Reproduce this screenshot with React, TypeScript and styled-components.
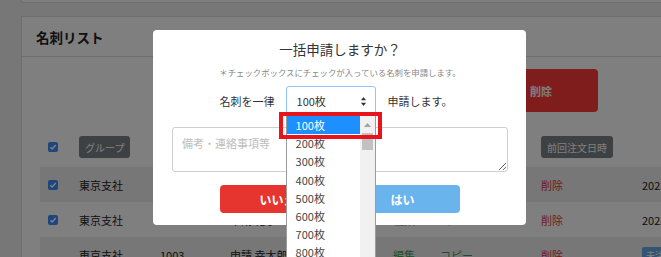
import React from "react";
import styled, { createGlobalStyle } from "styled-components";

const GlobalStyle = createGlobalStyle`
  html, body {
    margin: 0;
    padding: 0;
  }
  body {
    width: 661px;
    height: 257px;
    overflow: hidden;
    background: #eeeeee;
    font-family: "Noto Sans CJK JP", "Liberation Sans", sans-serif;
    color: #333;
  }
`;

/* ---------- page behind the modal ---------- */

const Page = styled.div`
  padding-left: 21px;
`;

const PrevCard = styled.div`
  height: 2px;
  background: #fff;
  border-bottom: 1px solid #dddddd;
  border-left: 1px solid #dddddd;
`;

const ListCard = styled.section`
  margin-top: 13px;
  height: 400px;
  background: #fff;
  border: 1px solid #dddddd;
  border-right: none;
`;

const CardHeader = styled.h2`
  margin: 0;
  height: 39px;
  padding-left: 14px;
  display: flex;
  align-items: center;
  font-size: 13.5px;
  font-weight: bold;
  color: #222;
  border-bottom: 1px solid #dddddd;
`;

const CardBody = styled.div`
  padding: 12px 0 0 18px;
`;

const Toolbar = styled.div`
  display: flex;
  justify-content: flex-end;
  padding-right: 63px;
`;

const DangerButton = styled.button`
  width: 114px;
  height: 43px;
  border: none;
  border-radius: 4px;
  background: #ff3a3a;
  color: #fff;
  font-family: inherit;
  font-size: 11px;
  font-weight: bold;
`;

const Table = styled.div`
  margin-top: 15px;
`;

const Row = styled.div<{ $striped?: boolean; $head?: boolean }>`
  display: grid;
  grid-template-columns: 39px 81px 70px 163px 47px 101px 101px 1fr;
  align-items: center;
  height: ${(p) => (p.$head ? "40px" : "35px")};
  background: ${(p) => (p.$striped ? "#eeeeee" : "transparent")};
  font-size: 11px;
  color: #222;
  white-space: nowrap;
`;

const Cell = styled.div<{ $tone?: "red" | "green" }>`
  color: ${(p) =>
    p.$tone === "red" ? "#e23c3c" : p.$tone === "green" ? "#3f9f4f" : "#222"};
`;

const CheckCell = styled.div`
  padding-left: 8px;
  display: flex;
  align-items: center;
`;

const CheckBox = styled.span`
  width: 10px;
  height: 10px;
  border-radius: 2px;
  background: #3d8bfd;
  display: flex;
  align-items: center;
  justify-content: center;
`;

const HeadBadge = styled.span`
  display: inline-flex;
  align-items: center;
  height: 22px;
  padding: 0 6px;
  border-radius: 3px;
  background: #7a8288;
  color: #fff;
  font-size: 10px;
`;

const StatusBadge = styled.span`
  display: inline-flex;
  align-items: center;
  height: 16px;
  padding: 0 4px;
  border-radius: 2px;
  background: #6aa8e8;
  color: #fff;
  font-size: 9px;
`;

const Check = () => (
  <CheckBox>
    <svg width="8" height="8" viewBox="0 0 8 8">
      <path d="M1.3 4.2 L3.2 6 L6.8 1.9" fill="none" stroke="#fff" strokeWidth="1.5" />
    </svg>
  </CheckBox>
);

/* ---------- modal ---------- */

const Backdrop = styled.div`
  position: fixed;
  inset: 0;
  background: rgba(0, 0, 0, 0.5);
  display: flex;
  align-items: flex-start;
  padding: 30px 0 0 153px;
`;

const Modal = styled.div`
  width: 373px;
  box-sizing: border-box;
  background: #fff;
  border-radius: 4px;
  padding: 10px 18px 12px 19px;
  display: flex;
  flex-direction: column;
`;

const Title = styled.div`
  text-align: center;
  font-size: 13.5px;
  line-height: 19px;
  color: #333;
`;

const Note = styled.div`
  margin-top: 6px;
  text-align: center;
  font-size: 8.4px;
  line-height: 14px;
  color: #888;
`;

const ApplyRow = styled.div`
  margin-top: 7px;
  height: 30px;
  padding-right: 8px;
  display: flex;
  align-items: center;
  justify-content: center;
  font-size: 11px;
  color: #333;
`;

const Label = styled.span<{ $gap?: number }>`
  margin-right: ${(p) => p.$gap ?? 0}px;
`;

const SelectBox = styled.div`
  position: relative;
  width: 90px;
  height: 30px;
  box-sizing: border-box;
  margin-right: 12px;
  padding: 0 9px 0 10px;
  border: 1px solid #8ec5f5;
  border-radius: 3px;
  display: flex;
  align-items: center;
  justify-content: space-between;
`;

const Dropdown = styled.div`
  position: absolute;
  left: -1px;
  top: 28px;
  width: 90px;
  box-sizing: border-box;
  border: 1px solid #9a9a9a;
  background: #fff;
  display: flex;
  z-index: 2;
`;

const OptionList = styled.ul`
  flex: 1;
  margin: 0;
  padding: 0;
  list-style: none;
`;

const Option = styled.li<{ $selected?: boolean }>`
  height: 18.2px;
  line-height: 18px;
  padding-left: 9px;
  font-size: 11px;
  background: ${(p) => (p.$selected ? "#1e8fff" : "#fff")};
  color: ${(p) => (p.$selected ? "#fff" : "#444")};
`;

const ScrollTrack = styled.div`
  width: 15px;
  background: #f1f1f1;
  display: flex;
  flex-direction: column;
  align-items: center;
`;

const ScrollArrow = styled.div`
  height: 17px;
  width: 100%;
  display: flex;
  align-items: center;
  justify-content: center;
`;

const ScrollThumb = styled.div`
  width: 11px;
  height: 17px;
  background: #c1c1c1;
`;

const Highlight = styled.div`
  position: absolute;
  left: -8px;
  top: -4px;
  width: 103px;
  height: 27px;
  box-sizing: border-box;
  border: 4px solid #e8141c;
  pointer-events: none;
`;

const Memo = styled.textarea`
  margin-top: 11px;
  height: 45px;
  box-sizing: border-box;
  padding: 7px 9px;
  border: 1px solid #cfcfcf;
  border-radius: 3px;
  font-family: inherit;
  font-size: 11px;
  color: #333;
  &::placeholder {
    color: #bcbcbc;
  }
`;

const ButtonRow = styled.div`
  margin-top: 13px;
  display: flex;
  justify-content: center;
  gap: 10px;
`;

const ModalButton = styled.button<{ $variant: "no" | "yes" }>`
  width: 115px;
  height: 28px;
  border: none;
  border-radius: 4px;
  background: ${(p) => (p.$variant === "no" ? "#e6352f" : "#6ab4ee")};
  color: #fff;
  font-family: inherit;
  font-size: 12px;
  font-weight: bold;
`;

const SortIcon = () => (
  <svg width="5" height="9" viewBox="0 0 5 9">
    <path d="M2.5 0 L5 3.3 L0 3.3 Z" fill="#333" />
    <path d="M2.5 9 L5 5.7 L0 5.7 Z" fill="#333" />
  </svg>
);

const rows = [
  { group: "東京支社", id: "1001", name: "申請 一郎", date: "2023/05/12 10:30" },
  { group: "東京支社", id: "1002", name: "申請 花子", date: "2023/05/10 15:12" },
  { group: "東京支社", id: "1003", name: "申請 幸太郎", date: "" },
];

const amounts = [100, 200, 300, 400, 500, 600, 700, 800, 900, 1000];

const App = () => {
  return (
    <>
      <GlobalStyle />
      <Page>
        <PrevCard />
        <ListCard>
          <CardHeader>名刺リスト</CardHeader>
          <CardBody>
            <Toolbar>
              <DangerButton>削除</DangerButton>
            </Toolbar>
            <Table>
              <Row $head>
                <CheckCell>
                  <Check />
                </CheckCell>
                <div>
                  <HeadBadge>グループ</HeadBadge>
                </div>
                <div />
                <div />
                <div />
                <div />
                <div>
                  <HeadBadge>前回注文日時</HeadBadge>
                </div>
                <div />
              </Row>
              {rows.map((r, i) => (
                <Row key={r.id} $striped={i % 2 === 0}>
                  <CheckCell>{i < 2 && <Check />}</CheckCell>
                  <Cell>{r.group}</Cell>
                  <Cell>{r.id}</Cell>
                  <Cell>{r.name}</Cell>
                  <Cell $tone="green">編集</Cell>
                  <Cell $tone="green">コピー</Cell>
                  <Cell $tone="red">削除</Cell>
                  <Cell>{r.date || <StatusBadge>未注文</StatusBadge>}</Cell>
                </Row>
              ))}
            </Table>
          </CardBody>
        </ListCard>
      </Page>

      <Backdrop>
        <Modal>
          <Title>一括申請しますか？</Title>
          <Note>＊チェックボックスにチェックが入っている名刺を申請します。</Note>
          <ApplyRow>
            <Label $gap={11}>名刺を一律</Label>
            <SelectBox>
              <span>100枚</span>
              <SortIcon />
              <Dropdown>
                <OptionList>
                  {amounts.map((n, i) => (
                    <Option key={n} $selected={i === 0}>
                      {n}枚
                    </Option>
                  ))}
                </OptionList>
                <ScrollTrack>
                  <ScrollArrow>
                    <svg width="7" height="4" viewBox="0 0 7 4">
                      <path d="M3.5 0 L7 4 L0 4 Z" fill="#a3a3a3" />
                    </svg>
                  </ScrollArrow>
                  <ScrollThumb />
                </ScrollTrack>
                <Highlight />
              </Dropdown>
            </SelectBox>
            <Label>申請します。</Label>
          </ApplyRow>
          <Memo placeholder="備考・連絡事項等" />
          <ButtonRow>
            <ModalButton $variant="no">いいえ</ModalButton>
            <ModalButton $variant="yes">はい</ModalButton>
          </ButtonRow>
        </Modal>
      </Backdrop>
    </>
  );
};

export default App;
